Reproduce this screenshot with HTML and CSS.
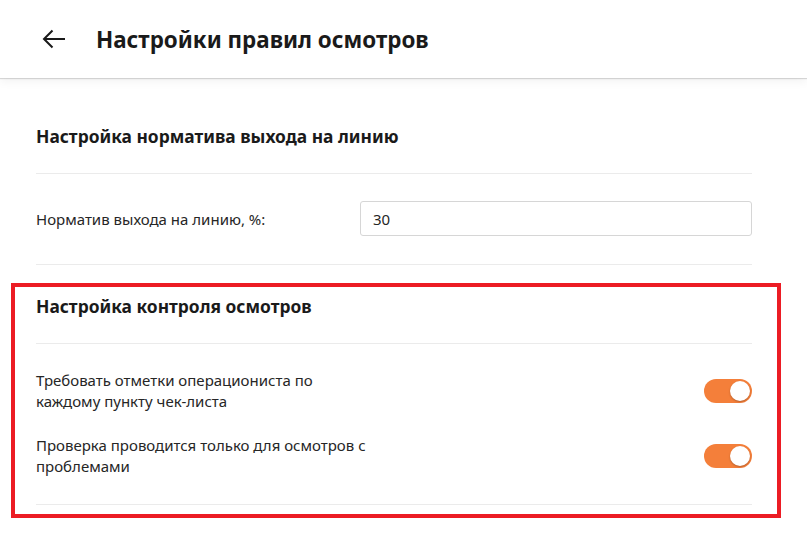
FILE: index.html
```html
<!DOCTYPE html>
<html lang="ru">
<head>
  <meta charset="UTF-8">
  <meta name="viewport" content="width=device-width, initial-scale=1.0">
  <title>Настройки правил осмотров</title>
  <link rel="stylesheet" href="styles.css">
</head>
<body>

  <header class="topbar">
    <button class="back-btn" type="button" aria-label="Назад">
      <svg width="24" height="20" viewBox="0 0 24 20" fill="none" stroke="#1a1a1a" stroke-width="2">
        <path d="M23 10H2"/>
        <path d="M10.5 1.5L2 10l8.5 8.5"/>
      </svg>
    </button>
    <h1>Настройки правил осмотров</h1>
  </header>

  <main class="page">
    <section class="block">
      <h2 class="block-title">Настройка норматива выхода на линию</h2>
      <div class="block-body">
        <div class="field-row">
          <label for="norm">Норматив выхода на линию, %:</label>
          <input type="text" id="norm" value="30">
        </div>
      </div>
    </section>

    <section class="block block-marked">
      <h2 class="block-title">Настройка контроля осмотров</h2>
      <div class="block-body switch-list">
        <div class="switch-row">
          <span class="switch-label">Требовать отметки операциониста по каждому пункту чек-листа</span>
          <span class="switch on"><span class="knob"></span></span>
        </div>
        <div class="switch-row">
          <span class="switch-label">Проверка проводится только для осмотров с проблемами</span>
          <span class="switch on"><span class="knob"></span></span>
        </div>
      </div>
    </section>
  </main>

</body>
</html>
```

FILE: styles.css
```css
body {
  margin: 0;
  background-color: #ffffff;
  color: #262626;
  font-family: "Noto Sans", "Open Sans", sans-serif;
}

/* шапка */
.topbar {
  height: 78px;
  display: flex;
  align-items: center;
  background-color: #ffffff;
  box-shadow: 0 1px 1px rgba(0, 0, 0, 0.14), 0 3px 10px rgba(0, 0, 0, 0.06);
  position: relative;
}
.back-btn {
  margin-left: 42px;
  width: 24px;
  height: 20px;
  padding: 0;
  border: none;
  background: none;
  cursor: pointer;
  display: flex;
}
.topbar h1 {
  margin: 0 0 0 30px;
  font-size: 22.4px;
  font-weight: 700;
  color: #1a1a1a;
}

/* блоки настроек */
.page {
  padding: 17px 55px 40px 36px;
}
.block {
  position: relative;
}
.block-title {
  margin: 0;
  padding: 29px 0 25px;
  font-size: 17.4px;
  line-height: 24px;
  font-weight: 700;
  color: #1a1a1a;
  border-bottom: 1px solid #ebebeb;
}
.block-body {
  border-bottom: 1px solid #ebebeb;
}

.field-row {
  display: grid;
  grid-template-columns: 324px 1fr;
  align-items: center;
  padding: 27px 0 28px;
}
.field-row label {
  font-size: 15px;
}
.field-row input {
  height: 35px;
  box-sizing: border-box;
  border: 1px solid #d6d6d6;
  border-radius: 3px;
  padding: 0 12px;
  font-family: inherit;
  font-size: 15px;
  color: #262626;
}

/* переключатели */
.switch-list {
  display: flex;
  flex-direction: column;
  gap: 23px;
  padding: 26px 0 27px;
}
.switch-row {
  display: flex;
  align-items: center;
  justify-content: space-between;
}
.switch-label {
  max-width: 334px;
  font-size: 15px;
  line-height: 21px;
}
.switch {
  width: 48px;
  height: 24px;
  border-radius: 12px;
  background-color: #ccc;
  position: relative;
}
.switch.on {
  background-color: #f47f3a;
}
.knob {
  position: absolute;
  top: 2px;
  left: 2px;
  width: 20px;
  height: 20px;
  border-radius: 50%;
  background-color: #ffffff;
  box-shadow: 0 1px 2px rgba(0, 0, 0, 0.25);
}
.switch.on .knob {
  left: 26px;
}

/* красная рамка выделения */
.block-marked::after {
  content: "";
  position: absolute;
  top: 18px;
  left: -25px;
  right: -29px;
  bottom: -13px;
  border: 4px solid #ec1c24;
  pointer-events: none;
}
```
